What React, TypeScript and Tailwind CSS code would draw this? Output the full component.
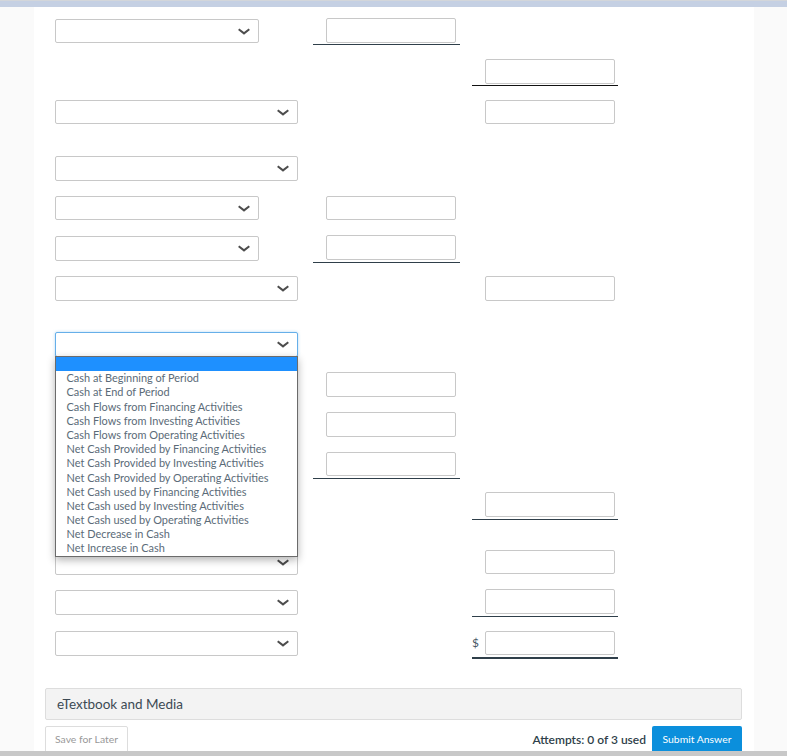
interface RowProps {
  gap: string;
  sel?: string;
  field?: string;
  line?: string;
  col?: "mid" | "right";
  dollar?: boolean;
  focused?: boolean;
}

const OPTIONS = [
  "Cash at Beginning of Period",
  "Cash at End of Period",
  "Cash Flows from Financing Activities",
  "Cash Flows from Investing Activities",
  "Cash Flows from Operating Activities",
  "Net Cash Provided by Financing Activities",
  "Net Cash Provided by Investing Activities",
  "Net Cash Provided by Operating Activities",
  "Net Cash used by Financing Activities",
  "Net Cash used by Investing Activities",
  "Net Cash used by Operating Activities",
  "Net Decrease in Cash",
  "Net Increase in Cash",
];

const Chevron = () => (
  <svg width="12" height="7" viewBox="0 0 12 7" fill="none" className="text-[#4d4d4d]">
    <path d="M0.7 1.2 L6 5.4 L11.3 1.2" stroke="currentColor" strokeWidth="2" />
  </svg>
);

const Select = ({ sel, focused }: { sel: string; focused?: boolean }) => (
  <div
    className={`flex items-center justify-end rounded-[2px] border bg-white pr-[8px] ${sel} ${
      focused ? "border-[#66afe9] shadow-[0_0_3px_rgba(102,175,233,0.5)]" : "border-[#c8c8c8]"
    }`}
  >
    <Chevron />
  </div>
);

const Cell = ({ field, line, dollar }: { field: string; line?: string; dollar?: boolean }) => (
  <div className={`flex items-start ${line ?? ""}`}>
    <span className="mt-[2px] w-[13px] text-[12px] leading-[20px] text-[#4a5a66]">{dollar ? "$" : ""}</span>
    <div className={`w-[130px] rounded-[2px] border border-[#c8c8c8] bg-white ${field}`} />
  </div>
);

const Row = ({ gap, sel, field, line, col, dollar, focused }: RowProps) => (
  <div className={`flex h-[25px] items-start ${gap}`}>
    <div className="w-[258px]">{sel && <Select sel={sel} focused={focused} />}</div>
    <div className="w-[147px]">{col === "mid" && field && <Cell field={field} line={line} />}</div>
    <div className="ml-[12px] w-[146px]">{col === "right" && field && <Cell field={field} line={line} dollar={dollar} />}</div>
  </div>
);

export default function App() {
  return (
    <div className="flex h-[756px] flex-col overflow-hidden bg-[#fafafa] font-['Lato',sans-serif]">
      <div className="h-[7px] shrink-0 border-t border-[#d3d6da] bg-[#c5d0e3]" />
      <div className="relative mx-[34px] w-[720px] flex-1 overflow-hidden bg-white pl-[21px] pt-[12px]">
        <Row gap="" sel="h-[24px] w-[204px]" col="mid" field="-mt-[1px] h-[25px]" line="h-[26px] border-b border-[#2f3f4a]" />
        <Row gap="mt-[15px]" col="right" field="h-[25px]" line="h-[27px] border-b border-[#111111]" />
        <Row gap="mt-[16px]" sel="h-[24px] w-[243px]" col="right" field="h-[24px]" />
        <Row gap="mt-[31px]" sel="h-[25px] w-[243px]" />
        <Row gap="mt-[15px]" sel="h-[24px] w-[204px]" col="mid" field="h-[24px]" />
        <Row gap="mt-[15px]" sel="h-[25px] w-[204px]" col="mid" field="-mt-[1px] h-[25px]" line="h-[27px] border-b border-[#2f3f4a]" />
        <Row gap="mt-[15px]" sel="h-[25px] w-[243px]" col="right" field="h-[25px]" />
        <Row gap="mt-[31px]" sel="h-[25px] w-[243px]" focused />
        <Row gap="mt-[15px]" sel="h-[25px] w-[204px]" col="mid" field="h-[25px]" />
        <Row gap="mt-[15px]" sel="h-[25px] w-[204px]" col="mid" field="h-[25px]" />
        <Row gap="mt-[15px]" sel="h-[25px] w-[204px]" col="mid" field="h-[24px]" line="h-[27px] border-b border-[#2f3f4a]" />
        <Row gap="mt-[15px]" sel="h-[25px] w-[243px]" col="right" field="h-[25px]" line="h-[28px] border-b border-[#2f3f4a]" />
        <Row gap="mt-[33px]" sel="h-[25px] w-[243px]" col="right" field="h-[24px]" />
        <Row gap="mt-[15px]" sel="h-[25px] w-[243px]" col="right" field="-mt-[1px] h-[25px]" line="h-[27px] border-b border-[#2f3f4a]" />
        <Row gap="mt-[16px]" sel="h-[25px] w-[243px]" col="right" field="h-[24px]" line="h-[28px] border-b-2 border-[#2f3f4a]" dollar />

        {/* open dropdown */}
        <div className="absolute left-[21px] top-[349px] w-[243px] border border-[#6b6b6b] bg-white text-[10.95px] leading-[14.18px] text-[#5b6b78] shadow-[0_3px_8px_rgba(0,0,0,0.3)]">
          <div className="h-[14.22px] bg-[#1e90ff]" />
          {OPTIONS.map((o) => (
            <div key={o} className="pl-[10.5px]">
              {o}
            </div>
          ))}
        </div>

        <div className="mt-[32px] mr-[12px] ml-[-10px] flex h-[32px] items-center rounded-[2px] border border-[#dddddd] bg-[#f3f3f3] pl-[11px] text-[13.5px] text-[#3c4a54]">
          eTextbook and Media
        </div>
        <div className="mt-[6px] mr-[12px] ml-[-10px] flex items-start justify-between">
          <button className="h-[30px] w-[83px] rounded-[2px] border border-[#dddddd] bg-white pb-[2px] text-[10.4px] text-[#999999]">
            Save for Later
          </button>
          <div className="flex items-center gap-[6px]">
            <span className="pb-[2px] text-[12px] font-semibold text-[#2f3f4a]">Attempts: 0 of 3 used</span>
            <button className="h-[30px] w-[90px] rounded-[2px] bg-[#0b8fdc] pb-[2px] text-[10.4px] text-white">Submit Answer</button>
          </div>
        </div>
      </div>
      <div className="h-[5px] shrink-0 bg-[#c8c8c8]" />
    </div>
  );
}
